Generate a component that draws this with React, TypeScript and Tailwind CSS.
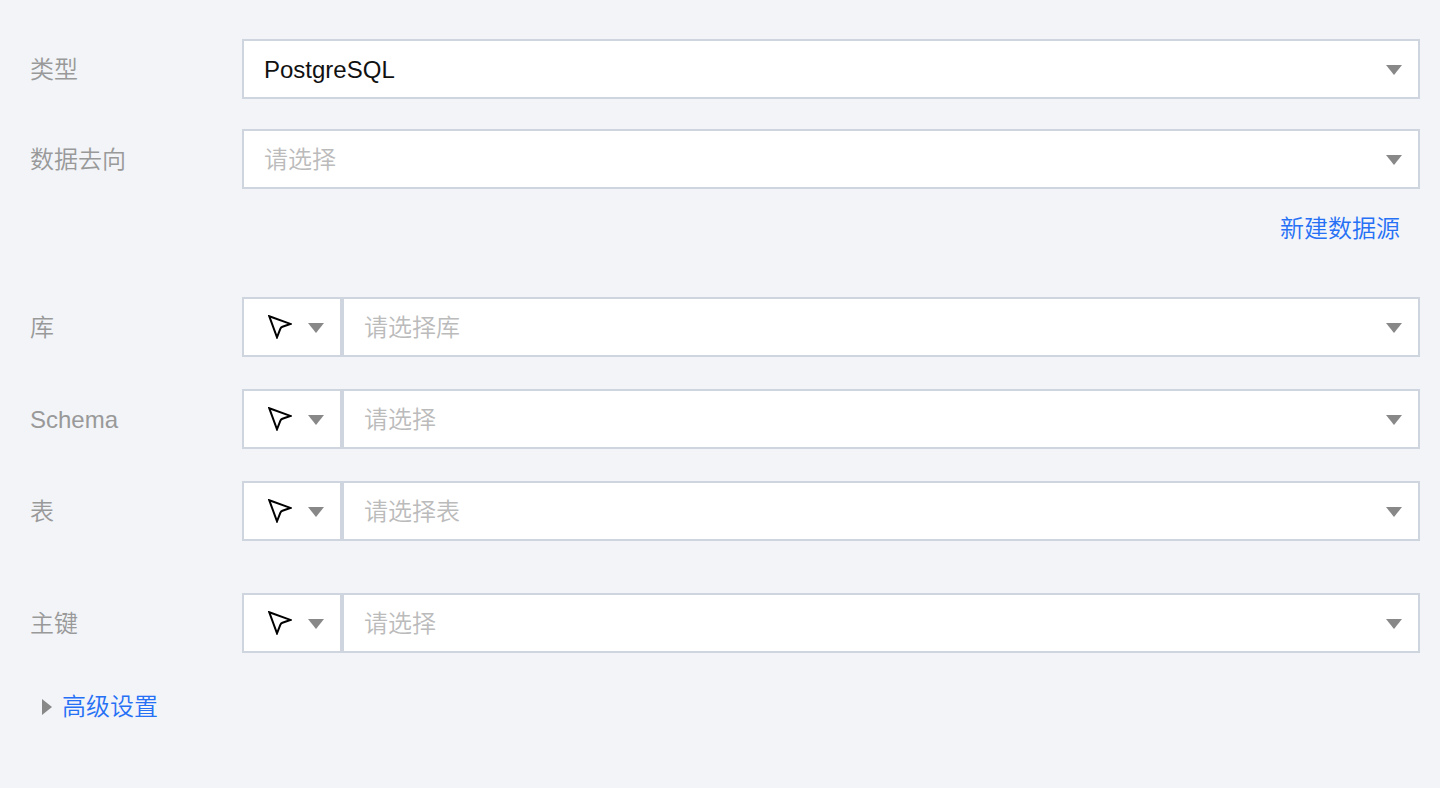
import React, { useId, useState } from 'react';

const MODES = [
  { value: 'pick', label: '选择' },
  { value: 'input', label: '输入' },
];

export default function App() {
  const [advancedOpen, setAdvancedOpen] = useState(false);

  return (
    <form className="min-h-screen bg-[#f2f4f8] pt-[39px] pr-5 pb-10 pl-[30px] font-['Liberation_Sans','Noto_Sans_CJK_SC',sans-serif] text-2xl font-[350] text-[#999]">
      <div className="flex flex-col gap-[30px]">
        <Field label="类型" options={['PostgreSQL', 'MySQL']} filled />
        <Field label="数据去向" options={['请选择']} />
      </div>

      <div className="mt-[22px] mb-[50px] flex justify-end pr-5 leading-9">
        <a href="#new" className="text-[#2670f5]">
          新建数据源
        </a>
      </div>

      <div className="flex flex-col gap-8">
        <Field label="库" options={['请选择库']} withMode />
        <Field label="Schema" options={['请选择']} withMode />
        <Field label="表" options={['请选择表']} withMode />
      </div>

      <div className="mt-[52px]">
        <Field label="主键" options={['请选择']} withMode />
      </div>

      <button
        type="button"
        aria-expanded={advancedOpen}
        onClick={() => setAdvancedOpen(!advancedOpen)}
        className="mt-9 ml-3 flex cursor-pointer items-center gap-[10px] leading-9 text-[#2670f5]"
      >
        <svg
          className={`h-4 w-[10px] ${advancedOpen ? 'rotate-90' : ''}`}
          viewBox="0 0 10 16"
          fill="#888"
          aria-hidden="true"
        >
          <path d="M0 0L10 8L0 16Z" />
        </svg>
        高级设置
      </button>
    </form>
  );
}

function Field({
  label,
  options,
  filled = false,
  withMode = false,
}: {
  label: string;
  options: string[];
  filled?: boolean;
  withMode?: boolean;
}) {
  const id = useId();

  return (
    <div className="flex items-center">
      <label htmlFor={id} className="w-[212px] shrink-0 pt-0.5 leading-9">
        {label}
      </label>
      {withMode && <ModeSelect name={label} />}
      <div className="relative min-w-0 flex-1">
        <select
          id={id}
          className={`block h-[60px] w-full appearance-none border-2 border-[#cfd5de] bg-white pt-0.5 pr-12 pl-5 ${
            filled ? 'text-[#111]' : 'text-[#bbb]'
          }`}
        >
          {options.map((option) => (
            <option key={option}>{option}</option>
          ))}
        </select>
        <Caret />
      </div>
    </div>
  );
}

function ModeSelect({ name }: { name: string }) {
  return (
    <div className="relative w-[100px] shrink-0">
      <select
        aria-label={`${name} 方式`}
        className="block h-[60px] w-full appearance-none border-2 border-[#cfd5de] bg-white"
      >
        {MODES.map((mode) => (
          <option key={mode.value} value={mode.value} aria-label={mode.label} />
        ))}
      </select>
      <svg
        className="pointer-events-none absolute inset-y-0 left-[26px] my-auto h-6 w-6"
        viewBox="0 0 24 24"
        fill="none"
        stroke="#000"
        strokeWidth="2"
        aria-hidden="true"
      >
        <path d="M1.3 1.3L22.4 8.9L14.4 11.8Q12.9 12.4 12.3 13.9L9 22.3Z" />
      </svg>
      <Caret />
    </div>
  );
}

function Caret() {
  return (
    <svg
      className="pointer-events-none absolute inset-y-0 right-[18px] my-auto h-3 w-4"
      viewBox="0 0 16 12"
      fill="#888"
      aria-hidden="true"
    >
      <path d="M0 2H16L8 12Z" />
    </svg>
  );
}
